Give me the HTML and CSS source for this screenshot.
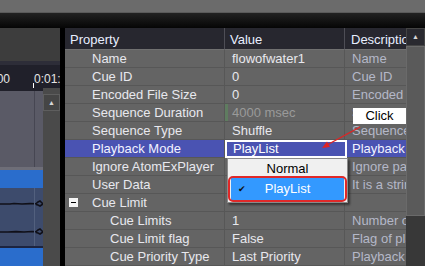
FILE: index.html
```html
<!DOCTYPE html>
<html lang="en">
<head>
    <meta charset="UTF-8">
    <title>Cue Properties</title>
    <link rel="stylesheet" href="styles.css">
</head>
<body>
    <div class="app">
        <div class="titlebar"></div>
        <div class="toolbar"></div>
        <div class="body">
            <!-- timeline (left) -->
            <div class="timeline">
                <div class="tl-top"></div>
                <div class="tl-strip"></div>
                <div class="tl-ruler">
                    <span class="mark m0">0:00:00</span>
                    <span class="mark m1">0:01:00</span>
                    <i class="tick"></i>
                </div>
                <div class="tl-tracks">
                    <div class="tracks">
                        <div class="track-gray"></div>
                        <div class="track-blue"></div>
                        <div class="track-wave">
                            <svg width="43" height="58" viewBox="0 0 43 58">
                                <path d="M0 16 L10 16 L14 15.5 L22 16 L30 15.6 L36 15.8 L38 14 L40 13 L42 15 L43 16 L40 18 L38 17 L36 16.4" fill="none" stroke="#101018" stroke-width="1.6"/>
                                <path d="M0 44 L8 44 L16 43.6 L24 44 L32 43.5 L36 43.8 L38 42 L40 41 L42 43 L43 44 L40 46 L38 45 L36 44.4" fill="none" stroke="#101018" stroke-width="1.6"/>
                                <line x1="34.5" y1="0" x2="34.5" y2="58" stroke="#52607e"/>
                            </svg>
                        </div>
                        <div class="track-blue"></div>
                    </div>
                    <div class="tl-scroll">
                        <div class="scroll-btn">&#9650;</div>
                    </div>
                </div>
            </div>
            <div class="split"></div>

            <!-- property grid -->
            <div class="props">
                <div class="row head">
                    <div class="cell">Property</div>
                    <div class="cell">Value</div>
                    <div class="cell">Description</div>
                </div>
                <div class="row">
                    <div class="cell name">Name</div>
                    <div class="cell val">flowofwater1</div>
                    <div class="cell desc">Name</div>
                </div>
                <div class="row">
                    <div class="cell name">Cue ID</div>
                    <div class="cell val">0</div>
                    <div class="cell desc">Cue ID</div>
                </div>
                <div class="row">
                    <div class="cell name">Encoded File Size</div>
                    <div class="cell val">0</div>
                    <div class="cell desc">Encoded file size</div>
                </div>
                <div class="row">
                    <div class="cell name">Sequence Duration</div>
                    <div class="cell val readonly">4000 msec</div>
                    <div class="cell desc">Sequence duration</div>
                </div>
                <div class="row">
                    <div class="cell name">Sequence Type</div>
                    <div class="cell val">Shuffle</div>
                    <div class="cell desc">Sequence type</div>
                </div>
                <div class="row selected">
                    <div class="cell name">Playback Mode</div>
                    <div class="cell val">PlayList</div>
                    <div class="cell desc">Playback mode</div>
                </div>
                <div class="row">
                    <div class="cell name">Ignore AtomExPlayer</div>
                    <div class="cell val"></div>
                    <div class="cell desc">Ignore parameters</div>
                </div>
                <div class="row">
                    <div class="cell name">User Data</div>
                    <div class="cell val"></div>
                    <div class="cell desc">It is a string</div>
                </div>
                <div class="row">
                    <div class="cell name group"><span class="toggle"></span>Cue Limit</div>
                    <div class="cell val"></div>
                    <div class="cell desc"></div>
                </div>
                <div class="row">
                    <div class="cell name sub">Cue Limits</div>
                    <div class="cell val">1</div>
                    <div class="cell desc">Number of cue limits</div>
                </div>
                <div class="row">
                    <div class="cell name sub">Cue Limit flag</div>
                    <div class="cell val">False</div>
                    <div class="cell desc">Flag of playback limit</div>
                </div>
                <div class="row">
                    <div class="cell name sub">Cue Priority Type</div>
                    <div class="cell val">Last Priority</div>
                    <div class="cell desc">Playback priority</div>
                </div>

                <!-- combo editor + open list -->
                <div class="editor">PlayList</div>
                <ul class="dropdown">
                    <li>Normal</li>
                    <li class="current"><span class="check">&#10004;</span>PlayList</li>
                </ul>
                <div class="ring"></div>
            </div>

            <div class="vscroll">
                <div class="scroll-btn">&#9650;</div>
                <div class="thumb"></div>
                <div class="track"></div>
            </div>
        </div>

        <!-- annotation -->
        <div class="callout">Click</div>
        <svg class="arrow" width="425" height="266" viewBox="0 0 425 266">
            <line x1="360" y1="127" x2="326" y2="145.5" stroke="#e02424" stroke-width="1.4"/>
            <path d="M322 148 L327 141.5 L330 147 Z" fill="#e02424"/>
        </svg>
    </div>
</body>
</html>
```

FILE: styles.css
```css
*{box-sizing: border-box;}
ul{list-style: none; margin: 0; padding: 0;}
body{margin: 0; background: #000;}

.app{
    position: relative;
    width: 425px;
    height: 266px;
    overflow: hidden;
    font-family: "Liberation Sans", Arial, sans-serif;
    font-size: 13px;
    color: #e8e8ee;
}
.titlebar{
    height: 13px;
    background: #6b6b6b;
    border-bottom: 1px solid #5a5a5a;
}
.toolbar{
    height: 15px;
    background: linear-gradient(#222, #050505);
}
.body{
    display: flex;
    height: 238px;
}

/* timeline */
.timeline{
    width: 60px;
    display: flex;
    flex-direction: column;
}
.tl-top{
    height: 34px;
    background: #3d3d3d;
}
.tl-strip{
    height: 4px;
    background: #2d2d38;
}
.tl-ruler{
    height: 24px;
    background: #20202a;
    position: relative;
    overflow: hidden;
    font-size: 12px;
    color: #e4e4e4;
}
.tl-ruler .mark{
    position: absolute;
    top: 7px;
    white-space: nowrap;
}
.tl-ruler .m0{left: -30px;}
.tl-ruler .m1{left: 34px;}
.tl-ruler .tick{
    position: absolute;
    left: 33px;
    bottom: 0;
    width: 1px;
    height: 5px;
    background: #fff;
}
.tl-tracks{
    flex: 1;
    display: flex;
}
.tracks{
    width: 43px;
    display: flex;
    flex-direction: column;
    background: #20202a;
}
.track-gray{
    height: 79px;
    margin-top: 3px;
    background: linear-gradient(90deg, #5a5a66 34px, #464652 34px, #464652 35px, #5a5a66 35px);
    border-bottom: 3px solid #6e6e78;
}
.track-blue{
    height: 18px;
    background: #2a6dcc;
}
.track-wave{
    height: 60px;
    background: #3d4b6c;
    border-bottom: 2px solid #1c2440;
}
.track-wave svg{display: block;}
.tl-scroll{
    width: 17px;
    background: #4a4a4a;
    padding-top: 6px;
}
.scroll-btn{
    height: 17px;
    background: #454545;
    border: 1px solid #5e5e5e;
    color: #d8d8d8;
    font-size: 7px;
    line-height: 15px;
    text-align: center;
}
.split{
    width: 5px;
    background: #000;
}

/* property grid */
.props{
    width: 341px;
    position: relative;
    background: #646464;
}
.row{
    display: grid;
    grid-template-columns: 160px 120px 61px;
    height: 18px;
}
.cell{
    line-height: 17px;
    border-bottom: 1px solid #575757;
    border-right: 1px solid #575757;
    white-space: nowrap;
    overflow: hidden;
    background: #646464;
}
.row.head{
    height: 22px;
}
.row.head .cell{
    background: #27272f;
    color: #e8eeff;
    line-height: 23px;
    padding-left: 5px;
    border-bottom: 1px solid #707070;
    border-right: 1px solid #4e4e56;
}
.row.head .cell:last-child{padding-left: 6px; border-right: 0;}
.cell.name{padding-left: 27px;}
.cell.sub{padding-left: 45px;}
.cell.val{padding-left: 7px;}
.cell.desc{padding-left: 7px; color: #b4b8c8; border-right: 0;}
.cell.readonly{
    color: #9a9a9a;
    box-shadow: inset 3px 0 0 #5f7c60;
    padding-left: 7px;
}
.cell.group{
    display: flex;
    align-items: center;
}
.toggle{
    width: 9px;
    height: 9px;
    background: #f4f4f4;
    margin-left: -23px;
    margin-right: 14px;
    position: relative;
}
.toggle::after{
    content: "";
    position: absolute;
    left: 2px;
    top: 4px;
    width: 5px;
    height: 1px;
    background: #000;
}
.row.selected .cell{
    background: #4a53b2;
    color: #f2f2ff;
}

.editor{
    position: absolute;
    left: 160px;
    top: 112px;
    width: 122px;
    height: 18px;
    border: 2px solid #fff;
    background: #4a53b2;
    color: #fff;
    line-height: 14px;
    padding-left: 6px;
}
.dropdown{
    position: absolute;
    left: 162px;
    top: 130px;
    width: 121px;
    height: 45px;
    background: #f0f0f0;
    border: 1px solid #8a8a8a;
    box-shadow: 2px 2px 2px rgba(0,0,0,.45);
    padding: 0 3px;
    color: #000;
    text-align: center;
}
.dropdown li{
    height: 19px;
    line-height: 19px;
    position: relative;
}
.dropdown li.current{
    height: 22px;
    line-height: 22px;
    background: #3399ff;
    color: #fff;
}
.check{
    position: absolute;
    left: 7px;
    font-size: 9px;
    color: #111;
}
.ring{
    position: absolute;
    left: 163px;
    top: 148px;
    width: 119px;
    height: 26px;
    border: 2px solid #e02828;
    border-radius: 5px;
}

.vscroll{
    width: 19px;
    display: flex;
    flex-direction: column;
    background: #383838;
}
.vscroll .scroll-btn{
    height: 18px;
    line-height: 16px;
    background: #2a2a30;
    border-color: #444;
}
.vscroll .thumb{
    height: 170px;
    background: #5a5a5a;
    border: 1px solid #6a6a6a;
}
.vscroll .track{
    flex: 1;
    background: #383838;
}

/* annotation */
.callout{
    position: absolute;
    left: 353px;
    top: 108px;
    width: 53px;
    height: 16px;
    background: #fff;
    color: #000;
    text-align: center;
    line-height: 16px;
    font-size: 13px;
}
.arrow{
    position: absolute;
    left: 0;
    top: 0;
}
```
